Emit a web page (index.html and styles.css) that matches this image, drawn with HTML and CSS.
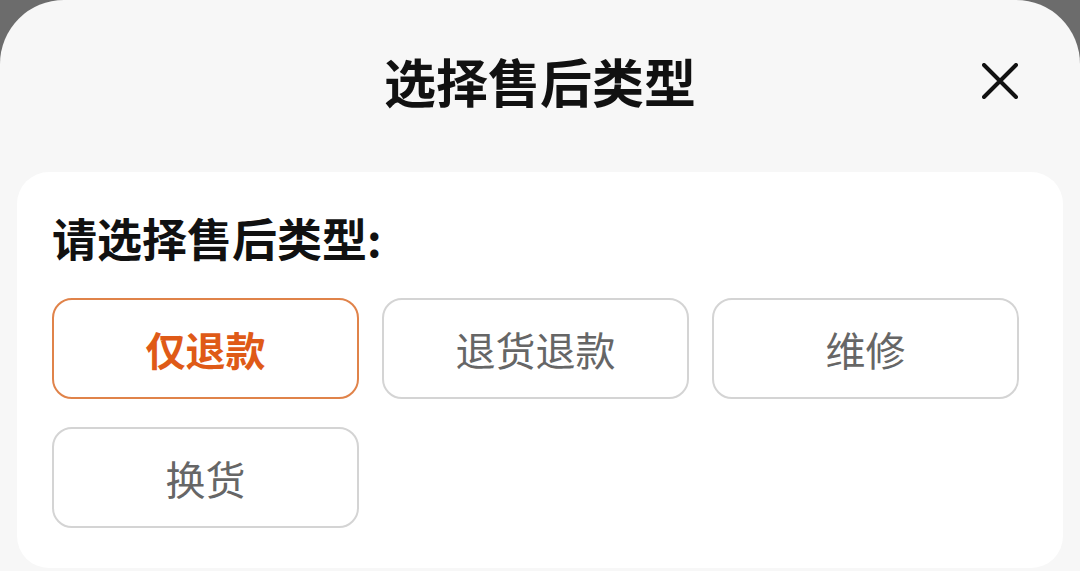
FILE: index.html
```html
<!DOCTYPE html>
<html lang="zh-CN">
<head>
    <meta charset="UTF-8">
    <meta name="viewport" content="width=device-width, initial-scale=1.0">
    <title>选择售后类型</title>
    <link rel="stylesheet" href="styles.css">
</head>
<body>
    <div class="sheet">
        <div class="sheet-header">
            <span></span>
            <h1 class="sheet-title">选择售后类型</h1>
            <button class="btn-cerrar" aria-label="关闭">
                <svg width="36" height="36" viewBox="0 0 36 36">
                    <path d="M2 2 L34 34 M34 2 L2 34" stroke="#111" stroke-width="4" stroke-linecap="round" fill="none"/>
                </svg>
            </button>
        </div>

        <div class="card">
            <div class="card-label">请选择售后类型:</div>
            <div class="tipos">
                <div class="tipo activo">仅退款</div>
                <div class="tipo">退货退款</div>
                <div class="tipo">维修</div>
                <div class="tipo">换货</div>
            </div>
        </div>
    </div>
</body>
</html>
```

FILE: styles.css
```css
html, body {
    margin: 0;
    height: 100%;
}
body {
    background-color: #6c6c6c;
    font-family: "Noto Sans CJK SC", "Noto Sans", sans-serif;
    overflow: hidden;
}
.sheet {
    background-color: #f7f7f7;
    border-radius: 64px 64px 0 0;
    min-height: 100%;
}
.sheet-header {
    display: grid;
    grid-template-columns: 1fr auto 1fr;
    align-items: center;
    height: 162px;
    margin-bottom: 10px;
}
.sheet-title {
    margin: 0;
    font-size: 52px;
    font-weight: bold;
    color: #111;
    line-height: 1.2;
}
.btn-cerrar {
    justify-self: end;
    margin-right: 62px;
    padding: 0;
    border: none;
    background: none;
    width: 36px;
    height: 36px;
    display: flex;
}
.card {
    background-color: #fff;
    margin: 0 17px;
    border-radius: 32px;
    padding: 40px 35px 40px;
}
.card-label {
    font-size: 45px;
    font-weight: bold;
    color: #111;
    line-height: 52px;
}
.tipos {
    display: grid;
    grid-template-columns: repeat(3, 307px);
    column-gap: 23px;
    row-gap: 28px;
    margin-top: 34px;
}
.tipo {
    box-sizing: border-box;
    height: 101px;
    border: 2px solid #d4d4d4;
    border-radius: 20px;
    display: flex;
    justify-content: center;
    align-items: center;
    font-size: 40px;
    color: #666;
}
.tipo.activo {
    border-color: #e0834a;
    color: #df5a17;
    font-weight: bold;
}
```
